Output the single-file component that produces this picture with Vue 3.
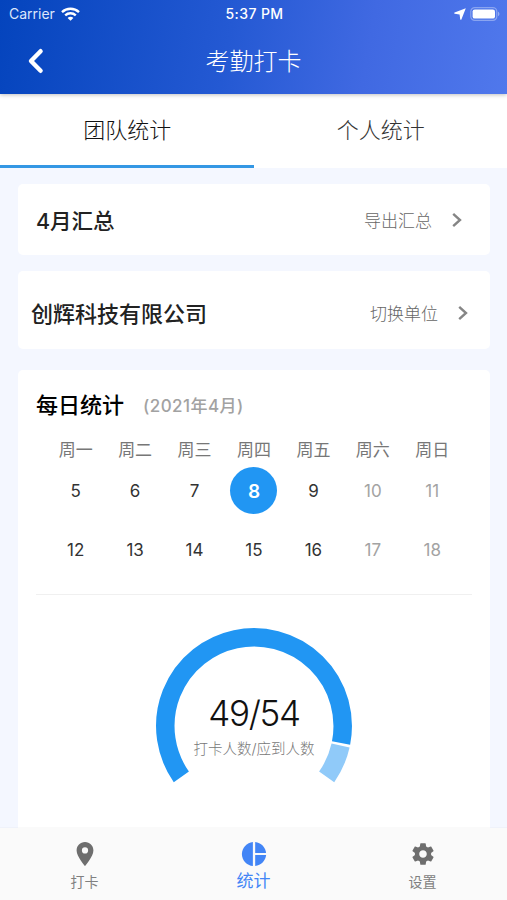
<template>
  <div class="page">
    <header class="header">
      <div class="status-bar">
        <div class="carrier">
          <span>Carrier</span>
          <svg width="19" height="14" viewBox="0 0 19 14" fill="none" stroke="#fff" stroke-width="2.4">
            <path d="M1 5.1C5.7 .7 13.3 .7 18 5.1" />
            <path d="M4.2 8.4C7.2 5.6 11.8 5.6 14.8 8.4" />
            <path d="M9.5 13.8L6.6 10.9C8.2 9.4 10.8 9.4 12.4 10.9Z" fill="#fff" stroke="none" />
          </svg>
        </div>
        <span class="clock">5:37 PM</span>
        <div class="status-right">
          <svg width="12" height="12" viewBox="0 0 12 12" fill="#fff">
            <path d="M11.8 .2L7.4 11.4C7.2 11.9 6.3 11.8 6.2 11.2L5.6 6.4L.7 5.8C.1 5.7 0 4.8 .6 4.6Z" />
          </svg>
          <svg width="30" height="14" viewBox="0 0 30 14">
            <rect x=".8" y=".6" width="26" height="12.8" rx="4" fill="none" stroke="#fff" stroke-opacity=".35" stroke-width="1.2" />
            <rect x="2.6" y="2.4" width="22.4" height="9.2" rx="2.2" fill="#fff" />
            <path d="M28 4.8C29.9 5.5 29.9 8.5 28 9.2Z" fill="#fff" fill-opacity=".4" />
          </svg>
        </div>
      </div>
      <div class="nav-bar">
        <button class="back-btn">
          <svg width="18" height="26" viewBox="0 0 18 26" fill="none" stroke="#fff" stroke-width="4.4"
            stroke-linecap="round" stroke-linejoin="round">
            <path d="M13.6 3.2L4 13L13.6 22.8" />
          </svg>
        </button>
        <h1 class="title">考勤打卡</h1>
      </div>
    </header>

    <div class="tabs">
      <div v-for="(tab, i) in tabs" :key="tab" :class="['tab', { active: activeTab === i }]" @click="activeTab = i">
        {{ tab }}
      </div>
    </div>

    <main class="content">
      <section class="card summary">
        <span class="card-title">4月汇总</span>
        <span class="card-link">导出汇总</span>
        <svg class="arrow" width="10" height="16" viewBox="0 0 10 16">
          <path d="M1.2 1.8L8 8L1.2 14.2" />
        </svg>
      </section>

      <section class="card company">
        <span class="card-title">创辉科技有限公司</span>
        <span class="card-link">切换单位</span>
        <svg class="arrow" width="10" height="16" viewBox="0 0 10 16">
          <path d="M1.2 1.8L8 8L1.2 14.2" />
        </svg>
      </section>

      <section class="card daily">
        <div class="daily-head">
          <span class="daily-title">每日统计</span>
          <span class="daily-month">(2021年4月)</span>
        </div>
        <div class="week">
          <span v-for="w in weekdays" :key="w">{{ w }}</span>
        </div>
        <div class="days">
          <span v-for="(d, i) in days" :key="d" :class="['day', { selected: d === selectedDay, weekend: i % 7 > 4 }]"
            @click="selectedDay = d">{{ d }}</span>
        </div>
        <div class="divider"></div>
        <div class="gauge">
          <svg width="196" height="158" viewBox="0 0 196 158" fill="none" stroke-width="18.5">
            <path :d="arc(START, splitAngle - 0.8)" stroke="#2196f3" />
            <path :d="arc(splitAngle + 0.8, START + SWEEP)" stroke="#90caf9" />
          </svg>
          <div class="gauge-text">
            <div class="gauge-value">{{ present }}/{{ total }}</div>
            <div class="gauge-label">打卡人数/应到人数</div>
          </div>
        </div>
      </section>
    </main>

    <footer class="tab-bar">
      <div class="bar-item">
        <svg width="26" height="26" viewBox="0 0 26 26" fill="#6e6e6e">
          <path fill-rule="evenodd"
            d="M13 1C8.2 1 4.6 4.7 4.6 9.4C4.6 15.5 13 25 13 25S21.4 15.5 21.4 9.4C21.4 4.7 17.8 1 13 1ZM13 6.3a3.1 3.1 0 1 1 0 6.2a3.1 3.1 0 0 1 0-6.2Z" />
        </svg>
        <span>打卡</span>
      </div>
      <div class="bar-item active">
        <svg width="26" height="26" viewBox="0 0 26 26" fill="#4285f6">
          <path d="M11.9 .9V25.1C5.8 24.5 .9 19.3 .9 13S5.8 1.5 11.9 .9Z" />
          <path d="M14.2 .9C20 1.5 24.6 6.1 25.1 11.9H14.2Z" />
          <path d="M14.2 14.1H25.1C24.6 19.9 20 24.5 14.2 25.1Z" />
        </svg>
        <span>统计</span>
      </div>
      <div class="bar-item">
        <svg width="28" height="28" viewBox="0 0 24 24" fill="#6e6e6e">
          <path
            d="M19.43 12.98c.04-.32.07-.64.07-.98s-.03-.66-.07-.98l2.11-1.65c.19-.15.24-.42.12-.64l-2-3.46c-.12-.22-.39-.3-.61-.22l-2.49 1c-.52-.4-1.08-.73-1.69-.98l-.38-2.65C14.46 2.18 14.25 2 14 2h-4c-.25 0-.46.18-.49.42l-.38 2.65c-.61.25-1.17.59-1.69.98l-2.49-1c-.23-.09-.49 0-.61.22l-2 3.46c-.13.22-.07.49.12.64l2.11 1.65c-.04.32-.07.65-.07.98s.03.66.07.98l-2.11 1.65c-.19.15-.24.42-.12.64l2 3.46c.12.22.39.3.61.22l2.49-1c.52.4 1.08.73 1.69.98l.38 2.65c.03.24.24.42.49.42h4c.25 0 .46-.18.49-.42l.38-2.65c.61-.25 1.17-.59 1.69-.98l2.49 1c.23.09.49 0 .61-.22l2-3.46c.12-.22.07-.49-.12-.64l-2.11-1.65zM12 15.5c-1.93 0-3.5-1.57-3.5-3.5s1.57-3.5 3.5-3.5 3.5 1.57 3.5 3.5-1.57 3.5-3.5 3.5z" />
        </svg>
        <span>设置</span>
      </div>
    </footer>
  </div>
</template>

<script setup>
import { ref, computed } from 'vue'

const START = 145 // 起始角度，顺时针
const SWEEP = 250
const RADIUS = 88.7

const tabs = ['团队统计', '个人统计']
const activeTab = ref(0)

const weekdays = ['周一', '周二', '周三', '周四', '周五', '周六', '周日']
const days = Array.from({ length: 14 }, (_, i) => i + 5)
const selectedDay = ref(8)

const present = ref(49)
const total = ref(54)

const splitAngle = computed(() => START + (SWEEP * present.value) / total.value)

function point(deg) {
  const rad = (deg * Math.PI) / 180
  return `${(98 + RADIUS * Math.cos(rad)).toFixed(2)} ${(98 + RADIUS * Math.sin(rad)).toFixed(2)}`
}

function arc(from, to) {
  const large = to - from > 180 ? 1 : 0
  return `M${point(from)}A${RADIUS} ${RADIUS} 0 ${large} 1 ${point(to)}`
}
</script>

<style>
body {
  margin: 0;
}
</style>

<style scoped>
.page {
  display: flex;
  flex-direction: column;
  height: 900px;
  overflow: hidden;
  background: #f4f7ff;
  color: #222;
  font-family: Inter, "Noto Sans CJK SC", sans-serif;
}

.header {
  flex: none;
  height: 94px;
  background: linear-gradient(100deg, #0444bd 0%, #2459d3 45%, #4069e2 72%, #5078ec 100%);
  color: #fff;
  box-shadow: 0 1px 4px rgba(0, 0, 0, 0.25);
  z-index: 1;
}

.status-bar {
  display: grid;
  grid-template-columns: 1fr auto 1fr;
  align-items: center;
  height: 27px;
  padding: 0 7px 0 9px;
  font-size: 14px;
  line-height: 27px;
}

.carrier {
  display: flex;
  align-items: center;
  gap: 6px;
  color: #dce6fb;
}

.clock {
  font-weight: 500;
  letter-spacing: 0.4px;
}

.status-right {
  display: flex;
  align-items: center;
  justify-content: flex-end;
  gap: 4px;
}

.nav-bar {
  display: grid;
  grid-template-columns: 80px 1fr 80px;
  align-items: center;
  height: 67px;
}

.back-btn {
  display: flex;
  padding: 0 0 0 27px;
  border: none;
  background: transparent;
}

.title {
  margin: 0;
  padding-top: 1px;
  text-align: center;
  font-size: 24px;
  font-weight: 300;
  line-height: 67px;
}

.tabs {
  display: flex;
  flex: none;
  height: 74px;
  background: #fff;
}

.tab {
  flex: 1;
  box-sizing: border-box;
  padding-left: 1px;
  border-bottom: 3px solid transparent;
  text-align: center;
  font-size: 22px;
  font-weight: 300;
  line-height: 72px;
  color: #333;
  cursor: pointer;
}

.tab.active {
  border-bottom-color: #3497e4;
  color: #111;
}

.content {
  display: flex;
  flex: 1;
  flex-direction: column;
  min-height: 0;
  padding: 16px 17px 0 18px;
}

.card {
  flex: none;
  box-sizing: border-box;
  border-radius: 5px;
  background: #fff;
}

.summary,
.company {
  display: flex;
  align-items: center;
}

.summary {
  height: 71px;
  padding: 1px 28px 0 18px;
}

.company {
  height: 78px;
  margin-top: 16px;
  padding: 6px 22px 0 13px;
}

.card-title {
  flex: 1;
  padding-top: 2px;
  font-size: 22px;
  font-weight: 500;
  line-height: 30px;
}

.summary .card-title {
  font-size: 21.5px;
}

.card-link {
  margin-right: 20px;
  padding-top: 1px;
  font-size: 17px;
  font-weight: 300;
  line-height: 24px;
  color: #666;
}

.arrow {
  fill: none;
  stroke: #858585;
  stroke-width: 2.4;
}

.daily {
  flex: 1;
  margin-top: 21px;
  padding: 0 18px;
  border-radius: 5px 5px 0 0;
}

.daily-head {
  display: flex;
  align-items: center;
  height: 65px;
  padding-bottom: 3px;
}

.daily-title {
  font-size: 22px;
  font-weight: 500;
  color: #000;
}

.daily-month {
  margin: 3px 0 0 19px;
  font-size: 17px;
  font-weight: 500;
  letter-spacing: 0.45px;
  color: #a2a2a2;
}

.week,
.days {
  display: grid;
  grid-template-columns: repeat(7, 1fr);
  justify-items: center;
  margin: 0 10px;
}

.week {
  font-size: 17px;
  line-height: 24px;
  color: #777;
}

.days {
  grid-auto-rows: 47px;
  row-gap: 12px;
  margin-top: 5px;
}

.day {
  width: 47px;
  border-radius: 50%;
  text-align: center;
  font-size: 17px;
  line-height: 49px;
  color: #333;
  cursor: pointer;
}

.day.weekend {
  color: #a3a3a3;
}

.day.selected {
  background: #2196f3;
  color: #fff;
  font-size: 19px;
  font-weight: 600;
}

.divider {
  height: 1px;
  margin-top: 21px;
  background: #f0f0f0;
}

.gauge {
  display: grid;
  justify-items: center;
  margin-top: 33px;
}

.gauge > * {
  grid-area: 1 / 1;
}

.gauge-text {
  padding-top: 61px;
  text-align: center;
}

.gauge-value {
  font-size: 35px;
  font-weight: 300;
  line-height: 48px;
  letter-spacing: -1.3px;
  color: #111;
}

.gauge-label {
  font-size: 14.5px;
  font-weight: 300;
  line-height: 24px;
  color: #777;
}

.tab-bar {
  display: grid;
  flex: none;
  grid-template-columns: repeat(3, 1fr);
  height: 72px;
  background: #fafafa;
  box-shadow: 0 -1px 1px rgba(0, 0, 0, 0.02);
  z-index: 1;
}

.bar-item {
  display: flex;
  flex-direction: column;
  align-items: center;
  font-size: 14px;
  color: #808080;
}

.bar-item svg {
  flex: none;
  height: 26px;
  margin-top: 12.5px;
}

.bar-item span {
  margin-top: 4px;
  line-height: 22px;
}

.bar-item.active span {
  margin-top: 3px;
  font-size: 17px;
  color: #4285f6;
}
</style>
